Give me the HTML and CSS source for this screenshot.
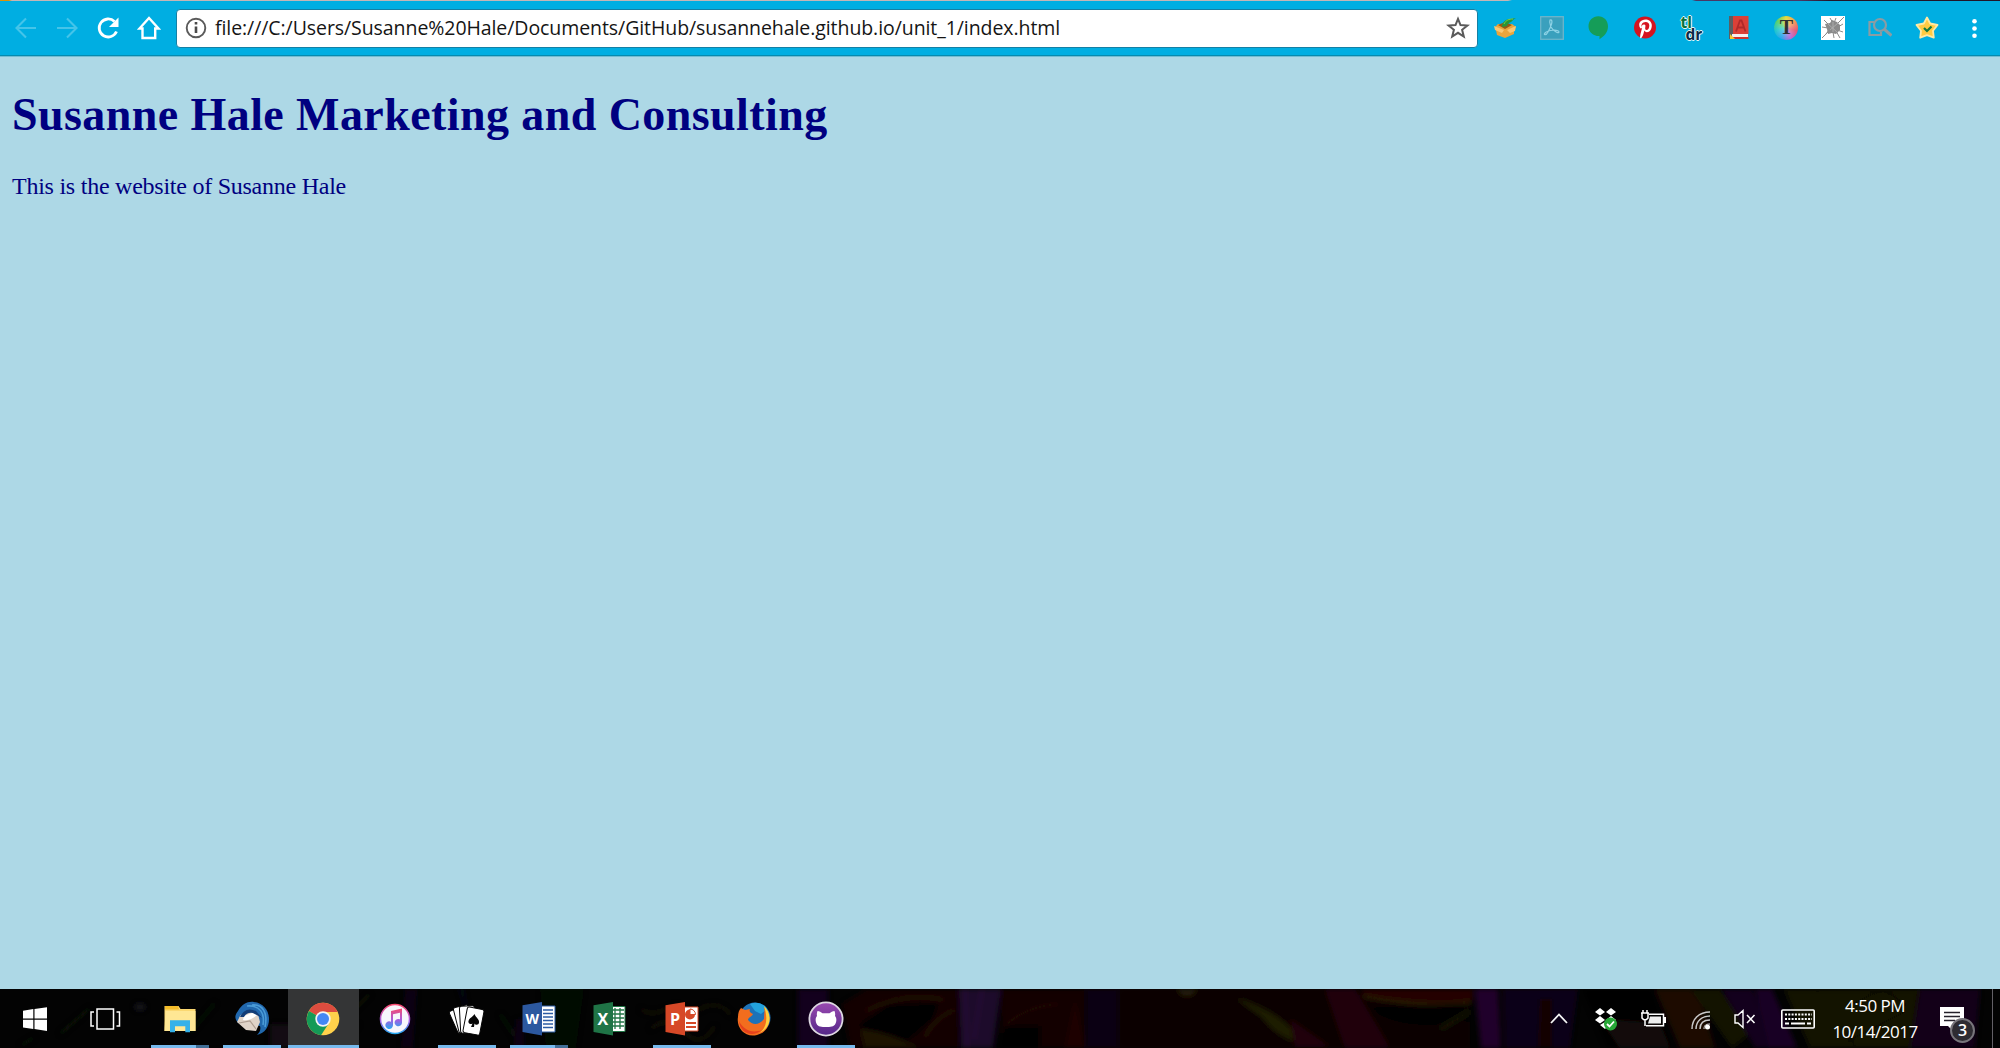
FILE: index.html
```html
<!DOCTYPE html>
<html lang="en">
<head>
<meta charset="utf-8">
<title>Susanne Hale Marketing and Consulting</title>
<link rel="stylesheet" href="styles.css">
</head>
<body>
<div class="screen">
  <div class="tab-edge"></div>
  <header class="toolbar">
    <nav class="nav-buttons">
      <svg class="tool-icon faded" viewBox="0 0 24 24"><path d="M22 12H3M12 2.5L2.5 12l9.5 9.5" fill="none" stroke="#fff" stroke-width="2.1"/></svg>
      <svg class="tool-icon faded" viewBox="0 0 24 24"><path d="M2 12h19M12 2.5l9.500 9.500L12 21.500" fill="none" stroke="#fff" stroke-width="2.1"/></svg>
      <svg class="tool-icon" viewBox="0 0 24 24"><path d="M20.500 15.500A9 9 0 1 1 18.500 5.500" fill="none" stroke="#fff" stroke-width="2.8"/><path d="M22.500 1.500v9.500h-9.500z" fill="#fff"/></svg>
      <svg class="tool-icon" viewBox="0 0 24 24"><path d="M2.500 12.500L12 2l9.500 10.500h-3.300V22H5.500v-9.500z" fill="none" stroke="#fff" stroke-width="2.400"/></svg>
    </nav>
    <div class="address-bar">
      <svg class="info-icon" viewBox="0 0 24 24"><circle cx="12" cy="12" r="9.300" fill="none" stroke="#5a5a5a" stroke-width="1.900"/><path d="M12 10.500v6.500M12 6v2.600" stroke="#4a4a4a" stroke-width="2.600"/></svg>
      <span class="url">file:///C:/Users/Susanne%20Hale/Documents/GitHub/susannehale.github.io/unit_1/index.html</span>
      <svg class="star-icon" viewBox="0 0 24 24"><path d="M12 2.800l2.500 6.200 6.900.5-5.300 4.300 1.700 6.700-5.800-3.700-5.800 3.700 1.700-6.700L2.600 9.500l6.900-.5z" fill="none" stroke="#5a5a5a" stroke-width="2"/></svg>
    </div>
    <div class="extensions">
      <svg class="ext" viewBox="0 0 24 24"><path d="M2 11l3-3h14l4 3-2 3v4l-9 4-8-3-1-5z" fill="#e9a53d"/><path d="M1 10l10 4-2 3-7-3zM23 10l-9 4 3 3 5-2z" fill="#f8c774"/><path d="M5 9l7-3 7 3-7 4z" fill="#925a15"/><path d="M9 11c0-5 4-8 8-8l6-1c-3 1-3 3-5 4-3 1-3 2-4 4z" fill="#259739"/><path d="M11 8c2-4 5-5 9-5" stroke="#7ed045" fill="none"/></svg>
      <svg class="ext" viewBox="0 0 24 24"><rect x=".7" y=".7" width="22.600" height="22.600" fill="#3aa0bd" stroke="#6eb5ca" stroke-width="1.300"/><path d="M10 4c4-1 1 7-2 12-2 4-5 3-3 1 3-3 14-4 14-1 0 2-6-1-8-5-1-3-2-5-1-7z" fill="none" stroke="#8dd2e5" stroke-width="1.200"/></svg>
      <svg class="ext" viewBox="0 0 24 24"><path d="M11.300.3c5.500 0 9.700 4.300 9.700 10 0 6-4 10-8.500 13v-3.200C6.500 20.300 1.500 16.300 1.500 10.300 1.500 4.600 5.800.3 11.300.3z" fill="#159d58"/></svg>
      <svg class="ext" viewBox="0 0 24 24"><circle cx="11" cy="11.500" r="11" fill="#d6131f"/><path d="M6.500 12.500C3 7 7 3.400 11.500 3.400c4 0 6.300 2.700 6.300 5.900 0 4-2 6.900-4.800 6.900-1.500 0-2.500-.8-2.700-1.600-.7 2.600-1.100 5.400-3 7.400l-1.200.3c-.2-3.300 1-6.300 1.700-9.300-.8-2.500.3-4.500 2.200-4.500 3.300 0-.4 5 2.300 5.500 2 0 3-2.300 3-4.600 0-2-1.400-3.300-3.600-3.300-3.400 0-5 3-3.900 5.500z" fill="#fff"/></svg>
      <div class="ext tldr"><span class="tl">tl</span><span class="dr">dr</span></div>
      <svg class="ext" viewBox="0 0 24 24"><path d="M2 0h4v23H2z" fill="#5b5e61"/><path d="M6 0h15.500v18H6z" fill="#dc4037"/><path d="M5 18h16v3.500H5z" fill="#f6eeee"/><path d="M5 21h16.500v2H5z" fill="#cf332e"/><path d="M9 15.500l4-11h1.500l4 11M10.500 11.500h6.500" fill="none" stroke="#b02a2a" stroke-width="1.800"/><path d="M3 18l5 5H3z" fill="#f7c92f"/></svg>
      <div class="ext rainbow">T</div>
      <svg class="ext" viewBox="0 0 24 24"><path d="M0 0h24v24H0z" fill="#fff"/><path d="M1 22L8 15M16 8l7-7M3 4l5 5M1 11l6 1M9 2l3 5M15 2l-2 5M22 8l-5 3M22 16l-6-2M13 22l-1-6M19 22l-4-7M5 18l3-4" stroke="#8a8a8a" stroke-width="1" fill="none"/><path d="M4 8l5-1 2-3 5 2 3 3v5l-4 4-4-1-4 1-1-5z" fill="#8b8b8b"/><path d="M7 8l9 8M9 14l8-7M12 6v10" stroke="#b4b4b4" stroke-width=".8"/></svg>
      <svg class="ext" viewBox="0 0 24 24"><path d="M6 6H1.500v13H13v-3" fill="none" stroke="#8b9ca3" stroke-width="2.200"/><circle cx="12" cy="9" r="6" fill="#12a9d8" stroke="#8b9ca3" stroke-width="2.200"/><path d="M16 13l7.500 6.500" stroke="#8b9ca3" stroke-width="3"/></svg>
      <svg class="ext" viewBox="0 0 24 24"><path d="M12 1.500l3.200 6 7.300 1.500-4.500 5.800.8 6.900-6.800-2.500-6.800 2.500.8-6.900L1.500 9l7.300-1.500z" fill="#ffcb43" stroke="#ffe9a4" stroke-width="1.800" stroke-linejoin="round"/><path d="M9 12l3 3 4.500-4.500" fill="none" stroke="#14793d" stroke-width="2.200"/></svg>
      <svg class="ext" viewBox="0 0 24 24"><g fill="#fff"><circle cx="12.500" cy="5.200" r="2.300"/><circle cx="12.500" cy="12.500" r="2.300"/><circle cx="12.500" cy="19.800" r="2.300"/></g></svg>
    </div>
  </header>

  <main class="page">
    <h1 class="title">Susanne Hale Marketing and Consulting</h1>
    <p class="intro">This is the website of Susanne Hale</p>
  </main>

  <footer class="taskbar">
    <svg class="wallpaper" viewBox="0 0 2000 59" preserveAspectRatio="none">
      <defs><filter id="soft" x="-5%" y="-30%" width="110%" height="160%"><feGaussianBlur stdDeviation="2.500"/></filter></defs>
      <rect width="2000" height="59" fill="#030303"/>
      <g filter="url(#soft)" opacity=".85">
        <path d="M60 45l30-26M20 57l15-9M190 44l25-30M340 35l30-30M500 25l20 30" stroke="#10130c" stroke-width="3" fill="none"/>
        <ellipse cx="140" cy="18" rx="6" ry="4" fill="#17181d"/>
        <path d="M270 35h90l-20 24h-70z" fill="#150a18"/>
        <path d="M405 0h12l-4 59h-12zM516 30h8v29h-10z" fill="#0d0313"/><path d="M458 0h6l5 30z" fill="#050819"/>
        <path d="M540 0h44l-8 59h-30z" fill="#020b03"/>
        <path d="M640 20q12 8 26 0t25 6q25-20 40 0M650 40q20-15 35 3t30-6" fill="none" stroke="#16120c" stroke-width="3"/>
        <path d="M798 0h30v59h-30z" fill="#180020"/><path d="M842 15l25-15h92v59H850z" fill="#170202"/>
        <path d="M860 35l28-19 50-2-5 16-30 26-35-3z" fill="#040404"/>
        <path d="M860 40q25 2 60 19h-55z" fill="#211505"/><path d="M865 22q40-20 80-11M925 48q10-20 30-27" fill="none" stroke="#281204" stroke-width="3"/>
        <path d="M959 0h42l-8 59h-32z" fill="#240a32"/><path d="M965 0l2 59M982 0l-8 50" stroke="#341544" stroke-width="2"/>
        <path d="M1001 0h84v59h-84z" fill="#150202"/><path d="M1005 37h35v22h-42z" fill="#030303"/><path d="M1005 37q20-20 55-22" fill="none" stroke="#201006" stroke-width="3"/>
        <path d="M1075 10l10 49h-20z" fill="#240302"/><path d="M1086 0h32v59h-32z" fill="#100218"/>
        <path d="M1120 0h350v59h-350z" fill="#0d0201"/><path d="M1176 0h22q-11 14-22 0z" fill="#292108"/>
        <path d="M1234 8q35 12 50 25t18 21q-25-5-40-26z" fill="#242006"/><path d="M1290 30l40 28h-35z" fill="#270309"/>
        <path d="M1325 0h30l35 59h-45z" fill="#260309"/><path d="M1363 0h110v12q-60 6-110-7z" fill="#2b0303"/><path d="M1363 7q60 12 108 6" fill="none" stroke="#302008" stroke-width="3"/>
        <path d="M1370 18l100-3v17q-60 10-90-6z" fill="#030302"/><path d="M1440 40l30-18" stroke="#151806" stroke-width="5"/>
        <path d="M1475 0h23l3 59h-20z" fill="#250430"/><path d="M1503 0h75l-8 59h-65z" fill="#10031a"/><path d="M1540 10h12v49h-14z" fill="#180606"/>
        <path d="M1582 0h70l20 59h-65z" fill="#060303"/><path d="M1600 30l20 29h50l-10-25z" fill="#12100a"/>
        <path d="M1655 0h42l18 59h-35z" fill="#240804"/><path d="M1690 0h30l30 45-18 14z" fill="#131306"/><path d="M1722 0h30l25 59h-22z" fill="#130420"/>
        <path d="M1755 0h17l25 59h-28z" fill="#1c0529"/><path d="M1784 0h135l-9 59h-100z" fill="#161505"/><path d="M1815 0l42 59M1848 17l35-17 25 17M1848 52l60-31" stroke="#0b0b04" stroke-width="3" fill="none"/>
        <path d="M1920 0h60l-5 59h-65z" fill="#17031f"/>
      </g>
    </svg>
    <div class="apps">
      <div class="system-slot"><svg class="task-icon" viewBox="0 0 36 36"><path d="M6 9.700l10.300-1.600v9.400H6zM17.500 7.900L30 6.200v11.300H17.500zM6 18.700h10.300V28L6 26.500zM17.500 18.700H30V30l-12.500-1.900z" fill="#fff"/></svg></div>
      <div class="system-slot"><svg class="task-icon" viewBox="0 0 36 36"><path d="M10 8h16.500v20H10zM7 11H4v14h3M29.500 11h3v14h-3" fill="none" stroke="#fff" stroke-width="1.500"/></svg></div>
      <div class="app-slot first running stacked"><svg class="task-icon" viewBox="0 0 36 36"><path d="M2.500 5h14l2 3h15v22h-31z" fill="#fbd871"/><path d="M3 5h13l1 3.500H3z" fill="#f5bd2a"/><path d="M3.500 10h30v20h-31z" fill="#ffe794"/><path d="M8 31.300V19.200h20v12.100h-4.700v-6h-10.300v6z" fill="#35b1e9"/></svg></div>
      <div class="app-slot running"><svg class="task-icon" viewBox="0 0 36 36"><path d="M4 10C8 3 14 0 20 1c9 1 15 8 15 17 0 8-4 14-12 16 3-3 4-6 3-9L4 22C0 17 1 14 4 10z" fill="#2168ae"/><path d="M18 4c11-1 16 8 13 22M13 5c13-1 18 7 16 19" stroke="#4a9bd7" stroke-width="1.600" fill="none"/><path d="M5 17c2-6 11-8 19-4l2 8-4 9-10-1-9-8z" fill="#dfd3c8"/><path d="M9 19c4 1 10-1 14-5l-5-2-8 3z" fill="#fff"/><path d="M5 22l11-2 6 8" stroke="#ad9d91" stroke-width="1.200" fill="none"/><path d="M6 16Q11 5 22 10l6 7-9-5q-6-1-9 4z" fill="#123d77"/></svg></div>
      <div class="app-slot running active"><svg class="task-icon" viewBox="0 0 36 36"><circle cx="18" cy="18" r="16.300" fill="#ffd14b"/><path d="M18 18L3.900 9.900A16.300 16.300 0 0 1 32.700 11H18z" fill="#dc4c3f"/><path d="M18 18L3.900 9.900A16.300 16.300 0 0 0 16 34.200L24 22z" fill="#149a57"/><circle cx="18" cy="18" r="7.700" fill="#f4f4f4"/><circle cx="18" cy="18" r="6" fill="#4488f4"/></svg></div>
      <div class="app-slot"><svg class="task-icon" viewBox="0 0 36 36"><defs><linearGradient id="note" x2="0" y2="1"><stop stop-color="#f74b70"/><stop offset=".55" stop-color="#a65be0"/><stop offset="1" stop-color="#25a9f2"/></linearGradient></defs><circle cx="18" cy="18" r="14.500" fill="#f7f6fc" stroke="url(#note)" stroke-width="1.500"/><path d="M14 10l11-2.500v14.500a3.700 3.700 0 1 1-2-3.700v-6.500l-7 1.500v11a3.800 3.800 0 1 1-2-3.500z" fill="url(#note)"/></svg></div>
      <div class="app-slot running"><svg class="task-icon" viewBox="0 0 36 36"><g fill="#fff" stroke="#050505" stroke-width="1"><rect x="4" y="7" width="15" height="24" rx="2" transform="rotate(-24 11 19)"/><rect x="7" y="5" width="15" height="26" rx="2" transform="rotate(-14 14 18)"/><rect x="11" y="5" width="15" height="27" rx="2" transform="rotate(-3 18 18)"/><rect x="16" y="7" width="17" height="26" rx="2" transform="rotate(11 24 20)"/></g><path d="M25.500 13c1.500 4 5 5 4.500 8.500 0 2.500-3.500 3-4.500 1l-.5 3.500h-3l1.500-3.500c-3 1.500-4.500-.5-4-2.500.5-3 4-3.500 6-7z" fill="#070707"/></svg></div>
      <div class="app-slot running stacked"><svg class="task-icon" viewBox="0 0 36 36"><path d="M19 5h15v26H19z" fill="#fff" stroke="#2d5ca4"/><path d="M22 9h10M22 12.500h10M22 16h10M22 19.500h10M22 23h10M22 26.500h10" stroke="#2d5ca4" stroke-width="1.500"/><path d="M1.500 4.200L21 1v33.500L1.500 31z" fill="#2c589f"/><text x="4.500" y="23" class="office-letter wide">W</text></svg></div>
      <div class="app-slot"><svg class="task-icon" viewBox="0 0 36 36"><path d="M19 5.500h14v25H19z" fill="#fff" stroke="#217645"/><path d="M21 9h11M21 13h11M21 17h11M21 21h11M21 25h11M23 7v21M28 7v21" stroke="#217645" stroke-width="1.300"/><path d="M1.500 4.200L21 1v33.500L1.500 31z" fill="#1f7446"/><text x="5.500" y="24" class="office-letter">X</text></svg></div>
      <div class="app-slot running"><svg class="task-icon" viewBox="0 0 36 36"><path d="M19 6h15v24H19z" fill="#fff" stroke="#d64827"/><circle cx="26" cy="13.500" r="5" fill="#d64827"/><path d="M26 13.500V8a5.500 5.500 0 0 1 5.500 5.500z" fill="#fff" stroke="#d64827"/><path d="M22 22h10M22 26h10" stroke="#d64827" stroke-width="1.800"/><path d="M1.500 4.200L21 1v33.500L1.500 31z" fill="#d64827"/><text x="6" y="24" class="office-letter">P</text></svg></div>
      <div class="app-slot"><svg class="task-icon" viewBox="0 0 36 36"><circle cx="19" cy="17" r="15.500" fill="#1d72b8"/><path d="M14 3c7-3 14 0 17 5l-6 5-6-3z" fill="#23a2dc"/><path d="M5 7l4 2 5-1c-1 2 0 4 3 5-1 3-5 3-5 6 5 6 11 5 16-1 0-5 1-8 0-12 9 7 7 25-7 28C9 37 0 27 2 16c0-4 1-7 3-9z" fill="#f26d1e"/><path d="M28 5c9 8 7 23-5 27 8-5 9-15 5-27z" fill="#fed13b"/><path d="M3 20c4 8 12 13 23 9-10 8-22 3-23-9z" fill="#e6411c"/></svg></div>
      <div class="app-slot running"><svg class="task-icon" viewBox="0 0 36 36"><defs><linearGradient id="cat" x2="0" y2="1"><stop stop-color="#9a4ab1"/><stop offset="1" stop-color="#542788"/></linearGradient></defs><circle cx="18" cy="18" r="16.600" fill="url(#cat)" stroke="#ded8e2" stroke-width="1.800"/><path d="M9.500 10c2 0 3.500 1 5 2.300h7c1.500-1.300 3-2.300 5-2.300.8 1.800.8 3.500.5 5 1.300 1.500 1.500 3 1.300 4.800-.4 4.500-3.300 6.200-7.300 6.200h-6c-4 0-6.900-1.700-7.300-6.200-.2-1.800 0-3.300 1.300-4.800-.3-1.500-.3-3.200.5-5z" fill="#fff"/></svg></div>
    </div>
    <div class="tray">
      <svg class="tray-icon chevron" viewBox="0 0 36 36"><path d="M10 22l8-8.500 8 8.500" fill="none" stroke="#f5f5f5" stroke-width="1.800"/></svg>
      <svg class="tray-icon dropbox" viewBox="0 0 36 36"><path d="M7 11l5-4 5 4-5 3.500zM18 11l5-4 5 4-5 3.500zM7 19l5-4 5 4-5 3.500zM18 19l5-4 5 4-5 3zM12 24l5-3 4 3-4 4z" fill="#fff"/><circle cx="22.500" cy="23" r="6.500" fill="#26a737"/><path d="M19 23l2.500 2.500 4.500-5" stroke="#fff" stroke-width="1.800" fill="none"/></svg>
      <svg class="tray-icon battery" viewBox="0 0 36 36"><path d="M14 13.200h14.500v11.500H11" fill="none" stroke="#fff" stroke-width="1.500"/><path d="M15 15.500h11v7H13z" fill="#eee"/><path d="M29 16h2v6h-2z" fill="#fff"/><path d="M7 12v5q3 4 6 0v-5zM6 12h8M8 12V9M12 12V9M10 18v7" fill="none" stroke="#fff" stroke-width="1.500"/></svg>
      <svg class="tray-icon wifi" viewBox="0 0 36 36"><path d="M9 28C9 18 16 11 27 11M13 28c0-8 6-13 14-13M17 28c0-6 4-9 10-9" fill="none" stroke="#c9c9c9" stroke-width="1.500"/><path d="M21 28c0-4 2-5 6-5" stroke="#ddd" fill="none"/><circle cx="24.500" cy="26" r="2.500" fill="#fff"/></svg>
      <svg class="tray-icon speaker" viewBox="0 0 36 36"><path d="M8 14h3l5-4.500v17L11 22H8z" fill="none" stroke="#fff" stroke-width="1.400"/><path d="M20 14l7.500 8M27.500 14L20 22" stroke="#fff" stroke-width="1.500"/></svg>
      <svg class="tray-icon keyboard" viewBox="0 0 36 36"><rect x="1.800" y="9" width="32.400" height="18" rx="1" fill="none" stroke="#fff" stroke-width="1.600"/><path d="M5 13.500h27M5 18h27" stroke="#fff" stroke-width="2" stroke-dasharray="2 1.300"/><path d="M5 22.500h4M11 22.500h14M27 22.500h4" stroke="#fff" stroke-width="1.900"/></svg>
      <div class="clock"><span class="time">4:50 PM</span><span class="date">10/14/2017</span></div>
      <div class="notice">
        <svg class="notice-icon" viewBox="0 0 36 36"><path d="M4 6h24v19h-9v7l-7-7H4z" fill="#fff"/><path d="M8 11.500h16M8 15.500h16M8 19.500h11" stroke="#24202a" stroke-width="1.500"/></svg>
        <span class="badge">3</span>
      </div>
      <div class="show-desktop"></div>
    </div>
  </footer>
</div>
</body>
</html>
```
FILE: styles.css
```css
* { box-sizing: border-box; }
body { margin: 0; }
svg { display: block; flex: none; }
.screen {
  width: 2000px;
  height: 1048px;
  display: flex;
  flex-direction: column;
  overflow: hidden;
  background: #add8e6;
}

/* Browser chrome */
.tab-edge {
  height: 1px;
  background: linear-gradient(90deg, #dc9209 0 9px, #c5b6b6 12px 1508px, #00aee3 1512px 1692px, #493765 1696px 1800px, #211528 1830px);
}
.toolbar {
  height: 56px;
  display: flex;
  align-items: center;
  padding: 0 0 1px 14px;
  background: #00aee2;
  border-bottom: 1px solid #72bdd2;
  box-shadow: inset 0 -1px #058aaf;
}
.nav-buttons { display: flex; gap: 17px; margin-right: 15px; }
.tool-icon { width: 24px; height: 24px; }
.faded { opacity: .27; }
.address-bar {
  width: 1302px;
  height: 39px;
  display: flex;
  align-items: center;
  padding: 0 7px;
  background: #fff;
  border: 1px solid #1480a5;
  border-radius: 4px;
}
.info-icon { width: 24px; height: 24px; }
.url {
  flex: 1;
  padding-left: 7px;
  font: 19.5px/30px "Open Sans", sans-serif;
  letter-spacing: -.073px;
  color: #151515;
  white-space: nowrap;
}
.star-icon { width: 24px; height: 24px; }
.extensions { display: flex; gap: 22.900px; margin-left: 15px; }
.ext { width: 24px; height: 24px; flex: none; }
.tldr {
  display: flex;
  flex-direction: column;
  font: bold 15.500px/12px "Open Sans", sans-serif;
}
.tl, .dr {
  position: relative;
  text-shadow: 1px 0 #e4f4f4, -1px 0 #e4f4f4, 0 1px #e4f4f4, 0 -1px #e4f4f4;
}
.tl { z-index: 1; color: #087239; }
.dr { color: #0d2945; padding-left: 5px; }
.rainbow {
  border-radius: 50%;
  background: radial-gradient(circle, #ffffff66, transparent 70%), conic-gradient(#e3d935, #f39752, #e3526e, #b968d8, #27a5ed, #19c5cb, #58cf65, #e3d935);
  font: bold 20px/23px "Liberation Serif", serif;
  text-align: center;
  color: #303030;
}

/* Document */
.page { flex: 1; padding: 0 12px; color: #000080; font-family: "Liberation Serif", serif; }
.title { margin: 31px 0 0; font-size: 46px; line-height: 54px; letter-spacing: .42px; white-space: nowrap; }
.intro { margin: 30px 0 0; font-size: 24px; line-height: 28px; letter-spacing: -.245px; white-space: nowrap; }

/* Taskbar */
.taskbar {
  position: relative;
  height: 59px;
  display: flex;
  justify-content: space-between;
  background: #030303;
}
.wallpaper { position: absolute; inset: 0; width: 100%; height: 100%; }
.apps, .tray { position: relative; display: flex; }
.system-slot { width: 70px; display: flex; align-items: center; justify-content: center; }
.app-slot {
  width: 71.750px;
  display: flex;
  align-items: center;
  justify-content: center;
  background: linear-gradient(#76b9ed, #76b9ed) center bottom / 0 3px no-repeat;
}
.first { margin-left: 4px; }
.running { background-size: 58px 3px; }
.stacked { background-image: linear-gradient(90deg, #76b9ed 45px, #426f97 45px); }
.active { background-color: #343536; background-size: 100% 3px; }
.task-icon { width: 36px; height: 36px; }
.office-letter { font: bold 16px "Open Sans", sans-serif; fill: #fff; }
.wide { font-size: 14px; }
.tray { align-items: center; }
.tray-icon { width: 36px; height: 36px; }
.dropbox { margin-left: 11px; }
.battery { margin-left: 11px; }
.wifi { margin-left: 12px; }
.speaker { margin-left: 8px; }
.keyboard { margin-left: 17px; }
.clock {
  width: 92px;
  margin-left: 13px;
  display: flex;
  flex-direction: column;
  align-items: center;
  font: 17px/26px "Open Sans", sans-serif;
  letter-spacing: -.5px;
  color: #fff;
  white-space: nowrap;
}
.notice { position: relative; width: 36px; height: 36px; margin-left: 15px; }
.notice-icon { width: 36px; height: 36px; }
.badge {
  position: absolute;
  left: 14px;
  top: 17px;
  width: 25px;
  height: 25px;
  border: 2px solid #77757b;
  border-radius: 50%;
  background: #2e2c32;
  color: #fff;
  font: 600 16px/21px "Open Sans", sans-serif;
  text-align: center;
}
.show-desktop { width: 8px; height: 59px; margin-left: 20px; border-left: 1px solid #625f66; }
```
